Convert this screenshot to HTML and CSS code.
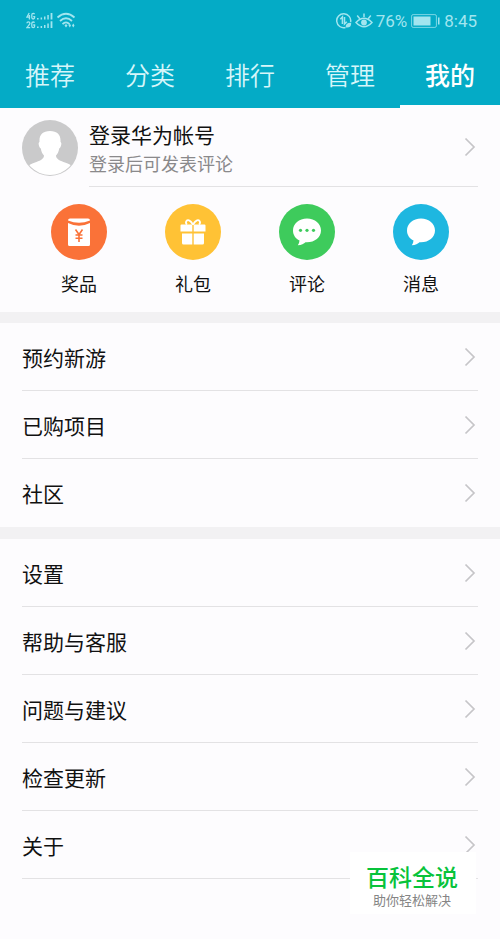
FILE: index.html
```html
<!DOCTYPE html>
<html lang="zh-CN">
<head>
<meta charset="utf-8">
<meta name="viewport" content="width=device-width, initial-scale=1">
<title>我的</title>
<link rel="stylesheet" href="styles.css">
</head>
<body>
<svg class="defs" aria-hidden="true">
  <symbol id="chevron" viewBox="0 0 12 20"><path d="M1.5 1.5 10 10 1.5 18.5" fill="none" stroke="currentColor" stroke-width="1.7"/></symbol>
</svg>
<header class="header">
  <div class="status">
    <div class="status-group">
      <svg width="50" height="18" viewBox="0 0 50 18" fill="currentColor" aria-hidden="true">
        <g fill="none" stroke="currentColor" stroke-width="1.3">
          <path d="M3.2 1 .9 5.2H4.2M3.4 3V7.5M8.5 2.2Q8.2 1.4 7.2 1.4 5.8 1.4 5.8 3V5.6Q5.8 7 7.2 7T8.6 5.6V4.6H7.2"/>
          <path d="M.9 11.2Q1 9.8 2.4 9.8T3.9 11.2Q3.9 12 .9 15.6H4.2M8.5 10.8Q8.2 10 7.2 10 5.8 10 5.8 11.6V14Q5.8 15.6 7.2 15.6T8.6 14.2V13H7.2"/>
        </g>
        <path d="M11 6h1.6v1.6H11zM14.600 5.500h1.500v2.100h-1.500zM18 4.500h1.500v3.100H18zM21.300 3h1.500v4.600h-1.500zM24.600 1h1.800v6.600h-1.800z"/>
        <path d="M11 14.400h1.600V16H11zM14.600 13.900h1.500V16h-1.500zM18 12.900h1.500V16H18zM21.300 11.400h1.500V16h-1.500zM24.600 9.200h1.800V16h-1.800z"/>
        <g fill="none" stroke="currentColor" stroke-width="1.8">
          <path d="M31.500 5.500Q40 -2 48.500 5.500M34 9Q40 3.500 46 9M36.500 12.200Q40 8.600 43.500 12.200"/>
        </g>
        <path d="M38.500 13.500 40 12l1.500 1.500L40 15.500zM42.500 13.500l1.300-2 1.200 2-1.200 2zM46 13.500l1.300-2 1.200 2-1.200 2z"/>
      </svg>
    </div>
    <div class="status-group">
      <svg width="16" height="18" viewBox="0 0 16 18" fill="none" stroke="currentColor" stroke-width="1.500" aria-hidden="true">
        <path d="M9.500 15.500A7 7 0 1 1 14.600 10M4.300 7.300 6.400 5V12M8.500 5V12L10.800 9.700"/>
        <path d="M9.700 15.500Q9.200 10.500 15.200 10.700 15.400 16.300 9.700 15.500z" fill="currentColor" stroke="none"/>
      </svg>
      <svg width="18" height="18" viewBox="0 0 18 18" fill="none" stroke="currentColor" stroke-width="1.500" aria-hidden="true">
        <path d="M1 10.500Q9 2 17 10.500 9 19 1 10.500zM9 5V1.500M4.600 6.400 2.200 3.500M13.400 6.400 15.800 3.500"/>
        <circle cx="9" cy="10.500" r="2.900" fill="currentColor" stroke="none"/>
      </svg>
      <span>76%</span>
      <svg class="battery" width="29" height="14" viewBox="0 0 29 14" aria-hidden="true">
        <rect x=".6" y=".6" width="24.800" height="12.800" rx="1.500" fill="none" stroke="currentColor" stroke-width="1" opacity=".75"/>
        <path d="M2.500 2.500h17v9h-17zM27 3.500h1.500v7H27z" fill="currentColor"/>
      </svg>
      <span>8:45</span>
    </div>
  </div>
  <nav class="tabs">
    <a class="tab" href="#">推荐</a>
    <a class="tab" href="#">分类</a>
    <a class="tab" href="#">排行</a>
    <a class="tab" href="#">管理</a>
    <a class="tab tab-active" href="#" aria-current="page">我的</a>
  </nav>
</header>
<main>
  <a class="profile" href="#">
    <svg class="avatar" viewBox="0 0 56 56" aria-hidden="true">
      <defs><clipPath id="face"><circle cx="28" cy="28" r="27"/></clipPath></defs>
      <circle cx="28" cy="28" r="28" fill="#cacacb"/>
      <path clip-path="url(#face)" fill="#fff" d="M28 11C20.500 11 17 15 17.500 22 15.800 22.500 16.800 27.500 18.800 28.500 19.300 32 20.500 34 22 35.500 22 39.500 17 41 13 42.500 9 44 7 45 5 47V56H51V47C49 45 47 44 43 42.500 39 41 34 39.500 34 35.500 35.500 34 36.700 32 37.200 28.500 39.200 27.500 40.200 22.500 38.500 22 39 15 35.500 11 28 11z"/>
    </svg>
    <div class="profile-body">
      <div class="profile-text">
        <span class="profile-name">登录华为帐号</span>
        <span class="profile-hint">登录后可发表评论</span>
      </div>
      <svg class="chevron" aria-hidden="true"><use href="#chevron"/></svg>
    </div>
  </a>
  <nav class="shortcuts">
    <a class="shortcut" href="#">
      <svg class="shortcut-icon" viewBox="0 0 56 56" aria-hidden="true">
        <circle cx="28" cy="28" r="28" fill="#fa7238"/>
        <path fill="#fff" d="M17 16.500Q17 14.500 19 14.500H37Q39 14.500 39 16.500 28 21 17 16.500zM17 19Q28 24.500 39 19V40.500Q39 42 37.500 42H18.500Q17 42 17 40.500z"/>
        <path d="M24.500 25.500 28 30.500 31.500 25.500M28 30.500V38M24.500 31H31.500M24.500 34.300H31.500" fill="none" stroke="#fa7238" stroke-width="1.600"/>
      </svg>
      <span>奖品</span>
    </a>
    <a class="shortcut" href="#">
      <svg class="shortcut-icon" viewBox="0 0 56 56" aria-hidden="true">
        <circle cx="28" cy="28" r="28" fill="#ffc235"/>
        <path fill="#fff" d="M16.500 20.500H27.300V27.500H15.500V21.500Q15.500 20.500 16.500 20.500zM28.700 20.500H39.500Q40.500 20.500 40.500 21.500V27.500H28.700zM17 29.500H27.300V40.500H18.500Q17 40.500 17 39zM28.700 29.500H39V39Q39 40.500 37.500 40.500H28.700z"/>
        <path d="M28 20.500C25 15.500 22.500 15.500 21.300 17.200Q20.300 19 22 20.500M28 20.500C31 15.500 33.500 15.500 34.700 17.200Q35.700 19 34 20.500" fill="none" stroke="#fff" stroke-width="1.800"/>
      </svg>
      <span>礼包</span>
    </a>
    <a class="shortcut" href="#">
      <svg class="shortcut-icon" viewBox="0 0 56 56" aria-hidden="true">
        <circle cx="28" cy="28" r="28" fill="#3ecb5c"/>
        <path fill="#fff" d="M28 14.500C20 14.500 14 19.700 14 26.500 14 31 16.500 34.500 20.500 36.500Q20.500 38.500 18.800 41.300C22.500 41.300 25 39.500 26.500 38.300 35 39 42 33.500 42 26.500 42 19.700 36 14.500 28 14.500z"/>
        <g fill="#3ecb5c"><circle cx="21.500" cy="26.300" r="1.600"/><circle cx="28" cy="26.300" r="1.600"/><circle cx="34.500" cy="26.300" r="1.600"/></g>
      </svg>
      <span>评论</span>
    </a>
    <a class="shortcut" href="#">
      <svg class="shortcut-icon" viewBox="0 0 56 56" aria-hidden="true">
        <circle cx="28" cy="28" r="28" fill="#1eb7e0"/>
        <path fill="#fff" d="M28 14.500C20 14.500 14 19.700 14 26.500 14 31 16.500 34.500 20.500 36.500Q20.500 38.500 18.800 41.300C22.500 41.300 25 39.500 26.500 38.300 35 39 42 33.500 42 26.500 42 19.700 36 14.500 28 14.500z"/>
      </svg>
      <span>消息</span>
    </a>
  </nav>
  <nav class="menu">
    <a class="row" href="#">预约新游<svg class="chevron" aria-hidden="true"><use href="#chevron"/></svg></a>
    <a class="row" href="#">已购项目<svg class="chevron" aria-hidden="true"><use href="#chevron"/></svg></a>
    <a class="row row-plain" href="#">社区<svg class="chevron" aria-hidden="true"><use href="#chevron"/></svg></a>
  </nav>
  <nav class="menu">
    <a class="row" href="#">设置<svg class="chevron" aria-hidden="true"><use href="#chevron"/></svg></a>
    <a class="row" href="#">帮助与客服<svg class="chevron" aria-hidden="true"><use href="#chevron"/></svg></a>
    <a class="row" href="#">问题与建议<svg class="chevron" aria-hidden="true"><use href="#chevron"/></svg></a>
    <a class="row" href="#">检查更新<svg class="chevron" aria-hidden="true"><use href="#chevron"/></svg></a>
    <a class="row" href="#">关于<svg class="chevron" aria-hidden="true"><use href="#chevron"/></svg></a>
  </nav>
</main>
<aside class="badge">
  <strong class="badge-title">百科全说</strong>
  <span class="badge-note">助你轻松解决</span>
</aside>
</body>
</html>
```
FILE: styles.css
```css
* {
  box-sizing: border-box;
}

body {
  position: relative;
  min-height: 100vh;
  margin: 0;
  background: #fdfcfe;
  color: #111;
  font-family: "Noto Sans CJK SC", sans-serif;
}

a {
  color: inherit;
  text-decoration: none;
}

svg {
  display: block;
  flex: none;
}

.defs {
  position: absolute;
  width: 0;
  height: 0;
}

.header {
  background: #04abc6;
  color: #fff;
}

.status {
  display: flex;
  align-items: center;
  justify-content: space-between;
  height: 42px;
  padding: 0 23px 0 26px;
  color: #a2e5ef;
  font-family: Roboto, sans-serif;
  font-size: 17px;
  line-height: 20px;
}

.status-group {
  display: flex;
  align-items: center;
  gap: 3px;
}

.battery {
  margin: 0 1px;
}

.tabs {
  display: grid;
  grid-template-columns: repeat(5, 1fr);
}

.tab {
  height: 66px;
  padding-top: 14px;
  border-bottom: 3px solid transparent;
  color: #d6f6fa;
  font-size: 25px;
  font-weight: 350;
  line-height: 36px;
  text-align: center;
}

.tab-active {
  border-bottom-color: #fdfcfe;
  color: #fff;
  font-weight: 500;
}

.profile {
  display: flex;
  gap: 11px;
  padding: 12px 22px 0;
}

.avatar {
  width: 56px;
  height: 56px;
}

.profile-body {
  display: flex;
  flex: 1;
  align-items: flex-start;
  justify-content: space-between;
  height: 67px;
  border-bottom: 1px solid #e3e2e4;
}

.profile-body .chevron {
  margin-top: 17px;
}

.profile-text {
  display: flex;
  flex-direction: column;
}

.profile-name {
  font-size: 21px;
  line-height: 28px;
}

.profile-hint {
  color: #8a898b;
  font-size: 18px;
  line-height: 30px;
}

.chevron {
  width: 12px;
  height: 20px;
  margin-right: 2px;
  color: #c6c5c8;
}

.shortcuts {
  display: grid;
  grid-template-columns: repeat(4, 1fr);
  padding: 17px 22px 15px;
}

.shortcut {
  display: flex;
  flex-direction: column;
  align-items: center;
  gap: 9px;
  font-size: 18px;
  line-height: 28px;
}

.shortcut-icon {
  width: 56px;
  height: 56px;
}

.menu {
  padding: 0 22px;
  border-top: 11px solid #f2f1f3;
}

.menu + .menu {
  border-top-width: 12px;
}

.row {
  display: flex;
  align-items: center;
  justify-content: space-between;
  height: 68px;
  border-bottom: 1px solid #e3e2e4;
  font-size: 21px;
  line-height: 30px;
}

.row-plain {
  border-bottom-color: transparent;
}

.badge {
  position: absolute;
  right: 24px;
  bottom: 25px;
  display: flex;
  flex-direction: column;
  align-items: center;
  padding: 14px 18px 4px 16px;
  background: #fff;
  font-family: Roboto, "Noto Sans CJK SC", sans-serif;
}

.badge-title {
  color: #08c33b;
  font-size: 23px;
  font-weight: 500;
  line-height: 26px;
}

.badge-note {
  color: #858585;
  font-size: 13px;
  line-height: 18px;
}
```
